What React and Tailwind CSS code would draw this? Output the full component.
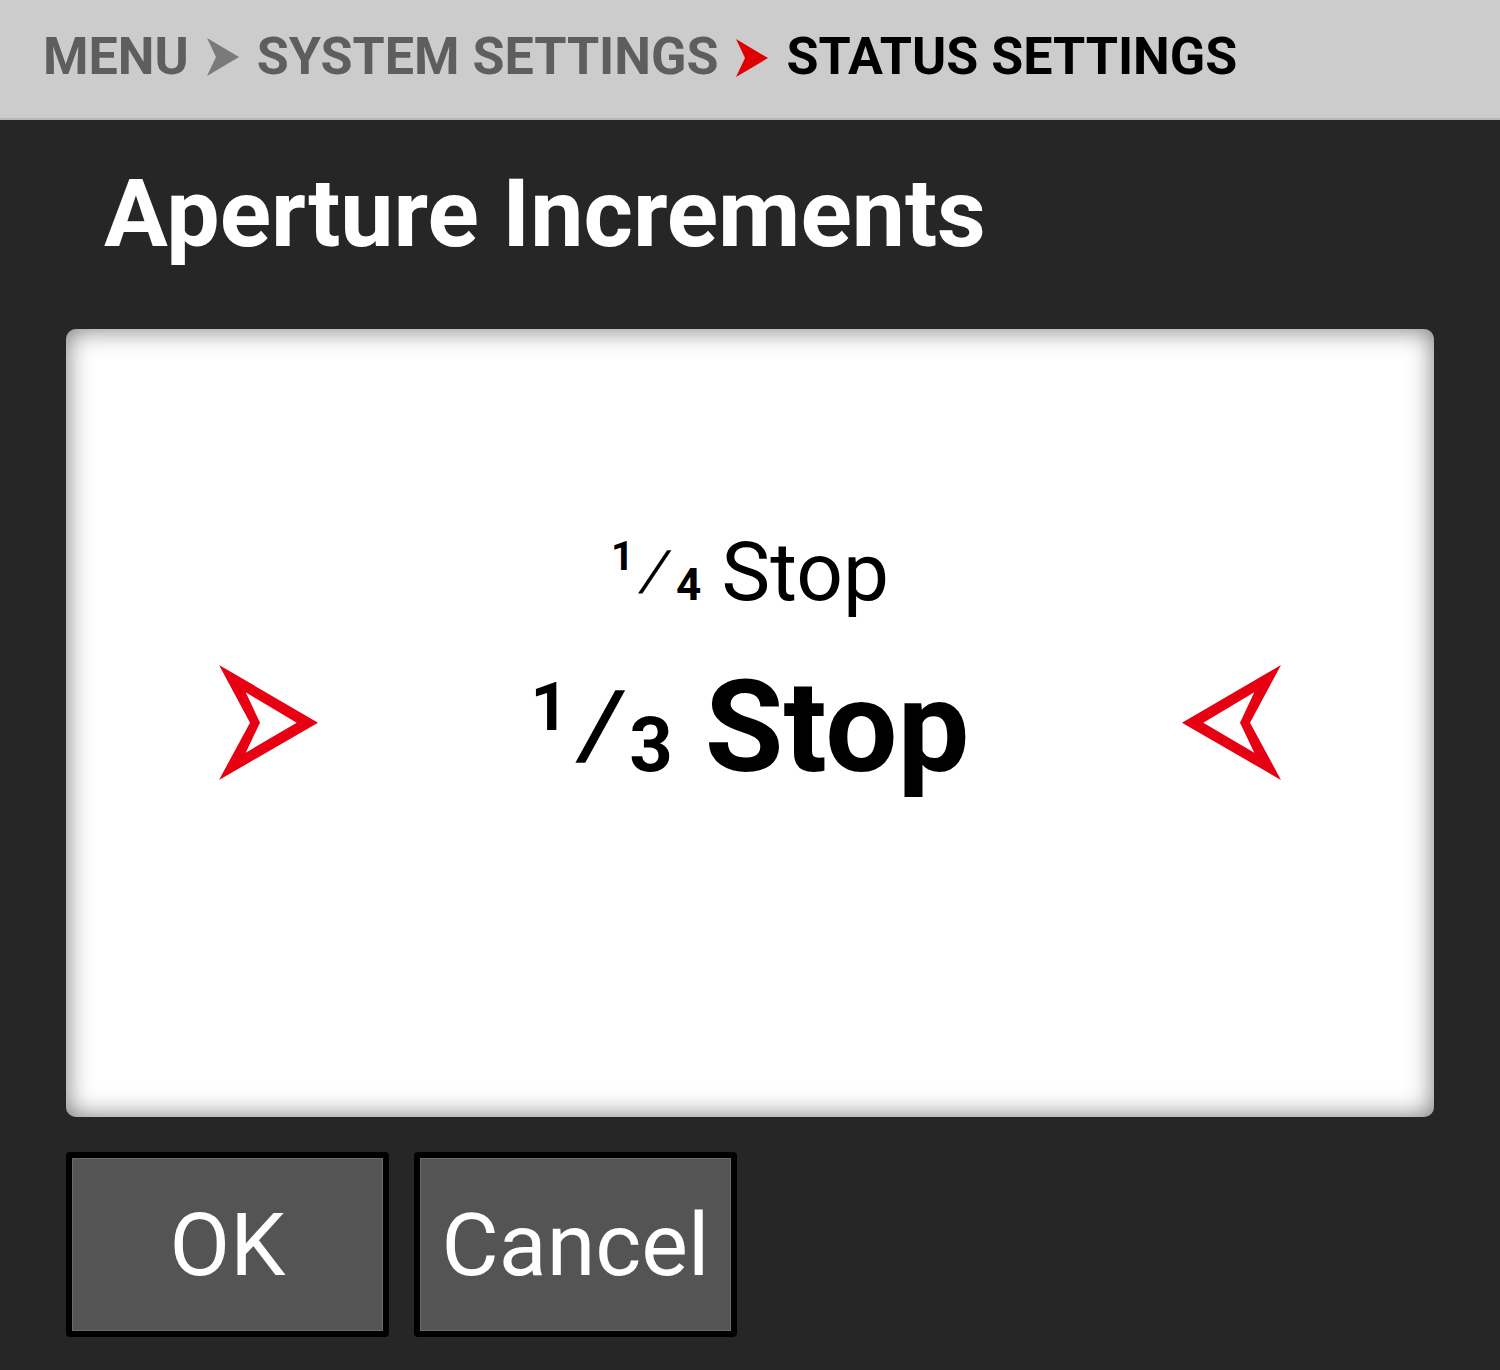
import React from "react";

function Chevron({ color }) {
  return (
    <svg width="32" height="38" viewBox="0 0 32 38" className="shrink-0">
      <polygon points="0,0 32,19 0,38 9,19" fill={color} />
    </svg>
  );
}

function Arrow({ flip }) {
  return (
    <svg
      width="100"
      height="118"
      viewBox="0 0 100 118"
      className={flip ? "shrink-0 -scale-x-100" : "shrink-0"}
    >
      <path
        fillRule="evenodd"
        fill="#e60012"
        d="M1 1 L100 58.7 L1 116 L32 58.7 Z M27.7 28.3 L42 58.7 L27.7 88.7 L78.7 58.7 Z"
      />
    </svg>
  );
}

export default function App() {
  return (
    <div className="w-[1500px] h-[1370px] bg-[#262626] font-['Roboto','Liberation_Sans',sans-serif] overflow-hidden">
      {/* breadcrumb */}
      <div className="h-[120px] bg-[#cccccc] border-b-2 border-[#b8b8b8] flex items-start pt-[31px] pl-[43px] gap-[18px]">
        <span className="text-[52px] leading-none font-bold text-[#5e5e5e]">MENU</span>
        <div className="mt-[7px]">
          <Chevron color="#7a7a7a" />
        </div>
        <span className="text-[52px] leading-none font-bold text-[#5e5e5e]">SYSTEM SETTINGS</span>
        <div className="mt-[8px]">
          <Chevron color="#e10000" />
        </div>
        <span className="text-[52px] leading-none font-bold text-black">STATUS SETTINGS</span>
      </div>

      {/* title */}
      <div className="pl-[104px] mt-[46px] text-[95px] leading-none font-bold text-white">
        Aperture Increments
      </div>

      {/* card */}
      <div className="mx-[66px] mt-[68px] h-[788px] bg-white rounded-[10px] shadow-[inset_0_0_26px_rgba(0,0,0,0.55)] flex items-center justify-between px-[152px]">
        <Arrow />
        <div className="flex flex-col items-center mb-[124px] text-black">
          <div className="text-[82px] leading-none whitespace-nowrap">
            <span className="text-[40px] font-bold align-[30px]">1</span>
            <span className="inline-block text-[56px] -skew-x-[16deg] align-[10px] ml-[10px] mr-[9px]">/</span>
            <span className="text-[44px] font-bold">4</span>
            <span> Stop</span>
          </div>
          <div className="mt-[50px] text-[128px] leading-none font-bold whitespace-nowrap">
            <span className="text-[66px] align-[41px]">1</span>
            <span className="inline-block text-[94px] -skew-x-[12deg] align-[14px] ml-[16px] mr-[10px]">/</span>
            <span className="text-[76px]">3</span>
            <span> Stop</span>
          </div>
        </div>
        <Arrow flip />
      </div>

      {/* buttons */}
      <div className="ml-[66px] mt-[35px] flex gap-[25px]">
        <div className="w-[323px] h-[185px] border-[6px] border-black rounded-[4px] bg-[#545454] shadow-[inset_0_0_0_1px_#6a6a6a] flex items-center justify-center text-white text-[88px] leading-none">
          OK
        </div>
        <div className="w-[323px] h-[185px] border-[6px] border-black rounded-[4px] bg-[#545454] shadow-[inset_0_0_0_1px_#6a6a6a] flex items-center justify-center text-white text-[88px] leading-none">
          Cancel
        </div>
      </div>
    </div>
  );
}
